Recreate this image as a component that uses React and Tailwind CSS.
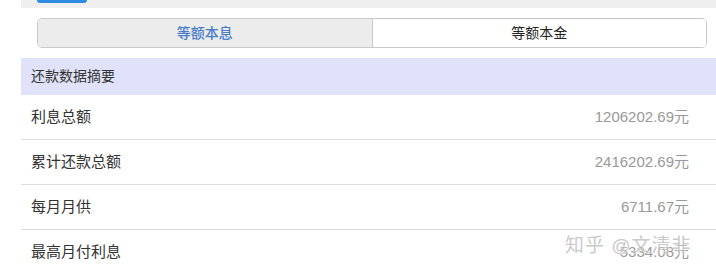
import React from "react";

const rows = [
    {label: "利息总额", value: "1206202.69元"},
    {label: "累计还款总额", value: "2416202.69元"},
    {label: "每月月供", value: "6711.67元"},
    {label: "最高月付利息", value: "5334.08元"},
];

const font = {fontFamily: '"Liberation Sans", "Noto Sans CJK SC", sans-serif'};

export default function App() {
    return (
        <div className="w-[716px] h-[272px] bg-white overflow-hidden relative" style={font}>
            <div className="ml-[21px] h-[8px] bg-[#efefef] relative">
                <div className="absolute left-[16px] top-0 w-[50px] h-[3px] bg-[#2d8ce0] rounded-b-[3px]"/>
            </div>
            <div className="ml-[37px] mr-[9px] mt-[10px] h-[30px] flex border border-[#c9c9c9] rounded-[5px] overflow-hidden text-[14px]">
                <div className="flex-1 bg-[#ececec] flex items-center justify-center text-[#4a7ccc] font-medium border-r border-[#c9c9c9]">
                    等额本息
                </div>
                <div className="flex-1 bg-white flex items-center justify-center text-[#222]">
                    等额本金
                </div>
            </div>
            <div className="ml-[21px] mt-[10px]">
                <div className="h-[37px] bg-[#dfe2f9] flex items-center pl-[10px] text-[14px] text-[#333]">
                    还款数据摘要
                </div>
                {rows.map((r, i) => (
                    <div
                        key={r.label}
                        className={"h-[45px] flex items-center justify-between pl-[10px] pr-[27px] " + (i < rows.length - 1 ? "border-b border-[#dcdcdc]" : "")}
                    >
                        <span className="text-[15px] text-[#333]">{r.label}</span>
                        <span className="text-[15px] text-[#999]">{r.value}</span>
                    </div>
                ))}
            </div>
            <div className="absolute left-[565px] top-[232px] text-[19px] text-[#bdbdbd] opacity-80 tracking-[1px]"
                 style={{textShadow: "0 0 2px #fff, 0 0 2px #fff"}}>
                知乎 @文清非
            </div>
        </div>
    );
}
